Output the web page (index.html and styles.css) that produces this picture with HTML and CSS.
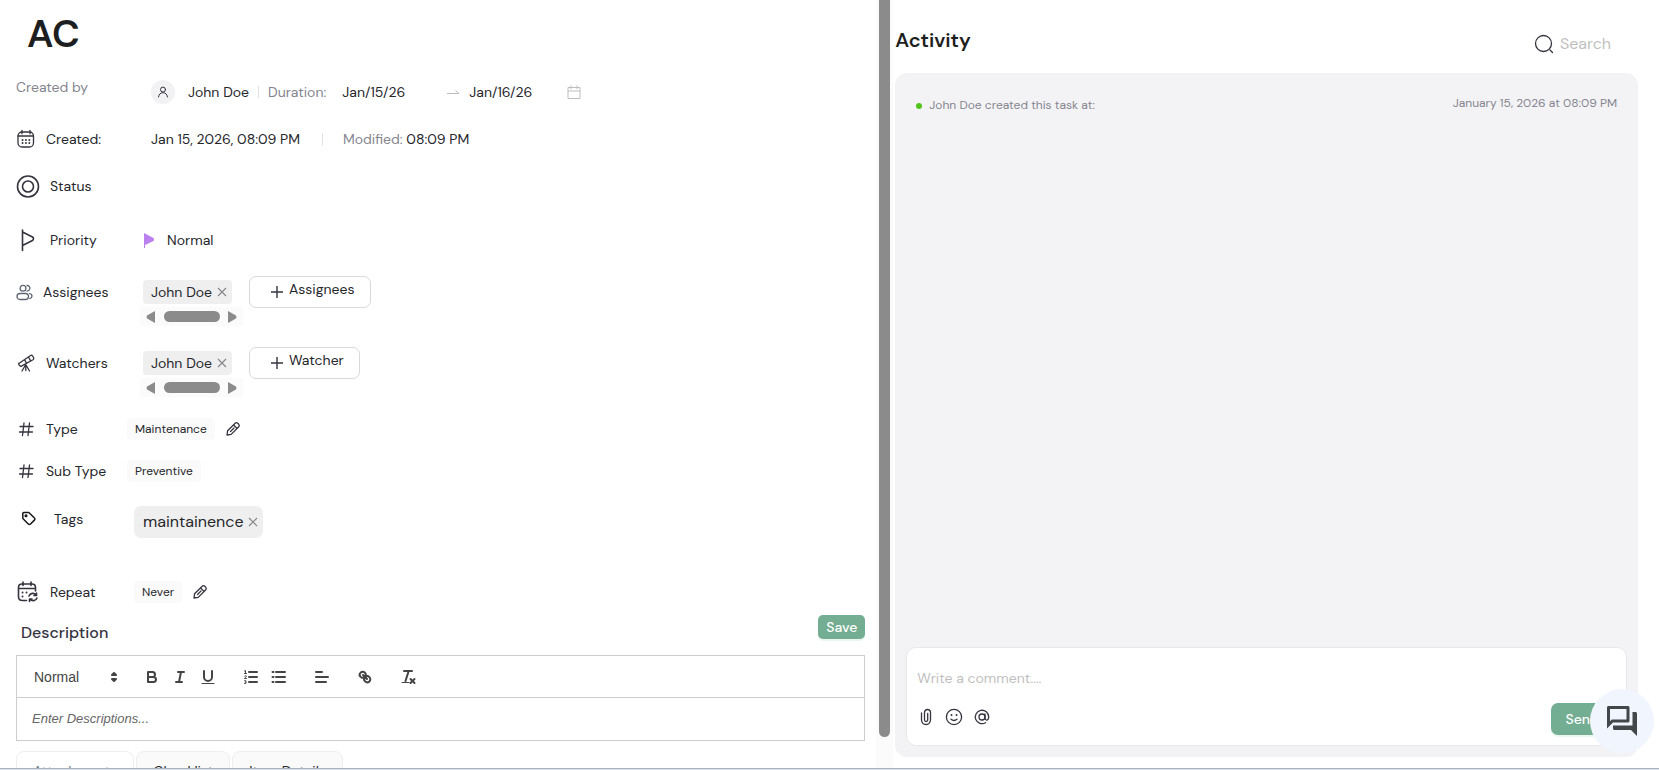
FILE: index.html
```html
<!DOCTYPE html>
<html lang="en">
<head>
<meta charset="utf-8">
<title>AC</title>
<link rel="stylesheet" href="styles.css">
</head>
<body>
<svg class="sprite" aria-hidden="true">
  <symbol id="hash" viewBox="0 0 20 20"><path d="M8 4 6.500 16.500M13.500 4 12 16.500M4 7.500h13M3.500 13h13"/></symbol>
  <symbol id="pencil" viewBox="0 0 16 16"><path d="M2 14l.6-4.200 7.600-7.600q1.300-1.100 2.600.1l.9.9q1.200 1.300.1 2.600L6.200 13.400zM8.600 4l3.400 3.400M5.500 10.500l3.500-3.500"/></symbol>
  <symbol id="cross" viewBox="0 0 10 10"><path d="M1 1l8 8M9 1 1 9"/></symbol>
  <symbol id="plus" viewBox="0 0 12 12"><path d="M6 0v12M0 6h12"/></symbol>
</svg>
<div class="app">
  <div class="panes">
    <main class="task">
      <h1 class="task-title">AC</h1>

      <div class="row row-48">
        <div class="label label-wide label-muted label-raised">Created by</div>
        <div class="value">
          <span class="avatar"><svg class="line" width="12" height="12" viewBox="0 0 12 12"><circle cx="6" cy="3.600" r="2.500"/><path d="M1.500 11c.5-2.900 2-4.300 4.500-4.300s4 1.400 4.500 4.300"/></svg></span>
          <span class="person">John Doe</span>
          <span class="divider"></span>
          <label class="muted duration" for="start">Duration:</label>
          <input class="date" id="start" value="Jan/15/26">
          <svg class="pale arrow" width="14" height="14" viewBox="0 0 14 14"><path d="M1 8.500h12L9.500 5.500"/></svg>
          <input class="date" id="end" value="Jan/16/26" aria-label="End date">
          <svg class="pale" width="14" height="14" viewBox="0 0 14 14"><path d="M1 2.500h12v11H1zM1 6h12M4 .5v3.500M10 .5v3.500"/></svg>
        </div>
      </div>

      <div class="row row-46">
        <div class="label label-wide">
          <svg class="line" width="20" height="20" viewBox="0 0 20 20"><rect x="2" y="3" width="15.500" height="15" rx="4"/><path d="M2 7H17.500M6 1.500v3.300M14 1.500v3.300"/><path class="dots" d="M6.500 11h.1M9.900 11h.1M13.300 11h.1M6.500 14h.1M9.900 14h.1M13.300 14h.1"/></svg>
          Created:
        </div>
        <div class="value">
          <span>Jan 15, 2026, 08:09 PM</span>
          <span class="divider divider-spaced"></span>
          <span class="muted">Modified:</span>&nbsp;<span>08:09 PM</span>
        </div>
      </div>

      <div class="row row-48">
        <div class="label"><svg class="line ring" width="24" height="24" viewBox="0 0 24 24"><circle cx="12" cy="12.500" r="10.500"/><circle cx="12" cy="12.500" r="5.500"/></svg>Status</div>
      </div>

      <div class="row row-60">
        <div class="label"><svg class="line flag" width="24" height="24" viewBox="0 0 24 24"><path d="M6.500 2v20.500M6.500 4l10 5q2 1.500 0 3.500l-10 5"/></svg>Priority</div>
        <div class="value priority"><svg width="10" height="15" viewBox="0 0 10 15"><path fill="#bb80f0" d="M0 0l9.500 5q1 1.500 0 3L1 12v3H0z"/></svg>Normal</div>
      </div>

      <div class="row row-people">
        <div class="label"><svg class="line people" width="17" height="17" viewBox="0 0 17 17"><circle cx="7" cy="4.300" r="2.900"/><rect x="1" y="9.500" width="11.500" height="6" rx="3"/><path d="M11 1.500q3.200.3 2.900 3-.4 2.300-2.900 2.700M13.500 9.500q2.700.8 2.500 2.800-.2 1.700-2.200 2.300"/></svg>Assignees</div>
        <div class="chips">
          <span class="chip">John Doe<button class="chip-close" aria-label="Remove John Doe"><svg width="10" height="10"><use href="#cross"/></svg></button></span>
          <div class="hscroll"><svg width="10" height="12" viewBox="0 0 10 12"><path d="M9 0v12L1 7.500Q0 6 1 4.500z"/></svg><i></i><svg width="10" height="12" viewBox="0 0 10 12"><path d="M1 0v12L9 7.500Q10 6 9 4.500z"/></svg></div>
        </div>
        <button class="add"><svg width="12" height="12"><use href="#plus"/></svg><span>Assignees</span></button>
      </div>

      <div class="row row-people">
        <div class="label"><svg class="line" width="20" height="20" viewBox="0 0 20 20"><path d="M3.200 10.200 14.600 2.500q1.300-.7 2 .5l1 1.700q.6 1.200-.6 2L5.400 13.100q-1 .5-1.500-.4l-1.200-1.300q-.4-.8.500-1.200zM8.500 6.700l2 3.400M12.500 4l2 3.600M9.500 12 6 18M10 12l3.500 6M9.800 12v5.500"/></svg>Watchers</div>
        <div class="chips">
          <span class="chip">John Doe<button class="chip-close" aria-label="Remove John Doe"><svg width="10" height="10"><use href="#cross"/></svg></button></span>
          <div class="hscroll"><svg width="10" height="12" viewBox="0 0 10 12"><path d="M9 0v12L1 7.500Q0 6 1 4.500z"/></svg><i></i><svg width="10" height="12" viewBox="0 0 10 12"><path d="M1 0v12L9 7.500Q10 6 9 4.500z"/></svg></div>
        </div>
        <button class="add"><svg width="12" height="12"><use href="#plus"/></svg><span>Watcher</span></button>
      </div>

      <div class="row row-42">
        <div class="label label-narrow"><svg class="line" width="20" height="20"><use href="#hash"/></svg>Type</div>
        <div class="value"><span class="pill">Maintenance</span><button class="edit" aria-label="Edit type"><svg class="line" width="16" height="16"><use href="#pencil"/></svg></button></div>
      </div>

      <div class="row row-42">
        <div class="label label-narrow"><svg class="line" width="20" height="20"><use href="#hash"/></svg>Sub Type</div>
        <div class="value"><span class="pill">Preventive</span></div>
      </div>

      <div class="row row-tags">
        <div class="label label-mid"><svg class="tagicon" width="28" height="16" viewBox="0 0 28 16"><path d="M6.800 2.500q0-.9 1-.9h4.700q.5 0 .9.400l5 5q1.100 1 0 2.100l-3.900 3.900q-1.100 1.100-2.200 0L7.300 8q-.5-.4-.5-1z"/><circle cx="10" cy="4.800" r=".8"/></svg>Tags</div>
        <span class="chip chip-large">maintainence<button class="chip-close" aria-label="Remove maintainence"><svg width="10" height="10"><use href="#cross"/></svg></button></span>
      </div>

      <div class="row row-repeat">
        <div class="label label-mid"><svg class="line repeat" width="24" height="24" viewBox="0 0 24 24"><path d="M10.500 20.500H6.500Q2.500 20.500 2.500 17V7.500q0-3.500 3.500-3.500h10Q19.500 4 19.500 7.500v3.500M2.500 8.500h17M7 2V5.500M15 2V5.500M13 16a4 4 0 0 1 7-1M20.500 13v2.500H18M21 18a4 4 0 0 1-7 1M13.500 21.500v-2.500H16"/><path class="dots" d="M6.500 12.500h.1M10.500 12.500h.1M6.500 16.500h.1"/></svg>Repeat</div>
        <div class="value"><span class="pill">Never</span><button class="edit" aria-label="Edit repeat"><svg class="line" width="16" height="16"><use href="#pencil"/></svg></button></div>
      </div>

      <div class="desc-head">
        <h2 class="desc-title">Description</h2>
        <button class="primary save">Save</button>
      </div>

      <div class="editor">
        <div class="toolbar">
          <span class="format">
            <select aria-label="Text style"><option>Normal</option></select>
            <svg class="format-arrows" width="18" height="18" viewBox="0 0 18 18"><path d="M7 11l2 2 2-2zM7 7l2-2 2 2z"/></svg>
          </span>
          <span class="group">
            <button aria-label="Bold"><svg viewBox="0 0 18 18"><path d="M5 4h4.500a2.500 2.500 0 0 1 0 5H5zM5 9h5.500a2.500 2.500 0 0 1 0 5H5z"/></svg></button>
            <button aria-label="Italic"><svg viewBox="0 0 18 18"><path d="M7 4h6M5 14h6M8 14l2-10"/></svg></button>
            <button aria-label="Underline"><svg viewBox="0 0 18 18"><path d="M5 3v6a4 4 0 0 0 8 0V3"/><path class="thin" d="M3 15.500h12"/></svg></button>
          </span>
          <span class="group">
            <button aria-label="Numbered list"><svg viewBox="0 0 18 18"><path d="M7 4h8M7 9h8M7 14h8"/><path class="thin" d="M2.500 5.500h2M3.500 5.500v-3l-1 .5M4.500 10.500h-2c0-1 1.900-1.200 1.900-2.200 0-.8-1.300-.8-1.700-.2M2.500 12.700c2-.8 2.500 1.300.6 1.400 2 0 1.600 2-.6 1.400"/></svg></button>
            <button aria-label="Bullet list"><svg viewBox="0 0 18 18"><path d="M6 4h9M6 9h9M6 14h9M2.500 4h1M2.500 9h1M2.500 14h1"/></svg></button>
          </span>
          <span class="group"><button aria-label="Align"><svg viewBox="0 0 18 18"><path d="M3 9h12M3 14h10M3 4h6"/></svg></button></span>
          <span class="group"><button aria-label="Link"><svg viewBox="0 0 18 18"><path d="M7 7l4 4M8.900 4.600a2.900 2.900 0 0 0-4.300 4.300C5.900 10.200 7.500 9.900 8.800 8.800 9.900 7.500 10.200 5.900 8.900 4.600zM13.400 9.100a2.900 2.900 0 0 0-4.300 4.300c1.300 1.300 3.200 1 4.300 0s1.300-3 0-4.300z"/></svg></button></span>
          <span class="group"><button aria-label="Clear formatting"><svg viewBox="0 0 18 18"><path d="M5 3h8M6.500 13 9.700 3M11.500 11l4 4M15.500 11l-4 4"/><path class="thin" d="M3 14.500h7"/></svg></button></span>
        </div>
        <textarea class="editor-body" rows="1" placeholder="Enter Descriptions..." aria-label="Description"></textarea>
      </div>

      <div class="tabs">
        <button class="tab tab-active">Attachments</button>
        <button class="tab">Checklist</button>
        <button class="tab">Item Details</button>
      </div>
    </main>

    <div class="vscroll"><i></i></div>

    <aside class="activity">
      <header class="activity-head">
        <h2 class="activity-title">Activity</h2>
        <label class="search"><svg class="line" width="20" height="20" viewBox="0 0 20 20"><circle cx="9.500" cy="9.500" r="8"/><path d="M16 16l2.500 2.500"/></svg><input placeholder="Search" aria-label="Search"></label>
      </header>
      <section class="feed">
        <div class="entry"><span class="dot"></span><span class="entry-text">John Doe created this task at:</span><time>January 15, 2026 at 08:09 PM</time></div>
        <form class="comment">
          <input class="comment-input" placeholder="Write a comment...." aria-label="Comment">
          <div class="comment-bar">
            <button type="button" aria-label="Attach file"><svg class="line" width="18" height="18" viewBox="0 0 18 18"><path d="M4.500 5v7q.4 4.500 4.500 4.500t4.500-4.500V4.500Q13.300 1.500 10.500 1.500T7.500 4.500V12q.2 1.500 1.600 1.500T10.700 12V5.500"/></svg></button>
            <button type="button" aria-label="Add emoji"><svg class="line" width="18" height="18" viewBox="0 0 18 18"><circle cx="9" cy="9" r="7.600"/><path d="M6 11.200q3 2.600 6 0"/><path class="dots" d="M6.500 7h.1M11.500 7h.1"/></svg></button>
            <button type="button" aria-label="Mention"><svg class="line" width="18" height="18" viewBox="0 0 18 18"><circle cx="9" cy="9" r="3"/><path d="M12 6v4.500q.3 1.800 2 1.600 1.600-.3 1.700-3.100A6.700 6.700 0 1 0 12.500 14.700"/></svg></button>
            <button type="button" class="primary send">Send</button>
          </div>
        </form>
      </section>
    </aside>
  </div>
  <div class="bottom-edge"></div>
</div>
<button class="chat" aria-label="Open chat"><svg width="36" height="36" viewBox="0 0 24 24"><path d="M15 4v7H5.170L4 12.170V4h11m1-2H3c-.550 0-1 .450-1 1v14l4-4h10c.550 0 1-.450 1-1V3c0-.550-.450-1-1-1zm5 4h-2v9H6v2c0 .550.450 1 1 1h11l4 4V7c0-.550-.450-1-1-1z"/></svg></button>
</body>
</html>
```
FILE: styles.css
```css
* { box-sizing: border-box; }
body {
  margin: 0;
  font: 14px/20px "DM Sans", Inter, sans-serif;
  color: #26272b;
  background: #fff;
}
button, input, select, textarea { font: inherit; color: inherit; }
button { padding: 0; border: 0; background: none; cursor: pointer; }
input { min-width: 0; padding: 0; border: 0; outline: 0; background: none; }
svg { flex: none; display: block; }
.sprite { position: absolute; width: 0; height: 0; }
.line { fill: none; stroke: #34343f; stroke-width: 1.3; stroke-linecap: round; stroke-linejoin: round; }
.dots { stroke-width: 1.8; stroke-linecap: round; }
.muted, .label-muted { color: #85858f; }

.app { height: 100vh; display: flex; flex-direction: column; overflow: hidden; }
.panes { flex: 1; min-height: 0; display: flex; }
.bottom-edge { height: 2px; background: #dce3eb; border-top: 1px solid #a3b1c1; }

/* Task details */
.task { flex: 876 0 0; min-width: 0; overflow: hidden; padding: 10px 11px 0 16px; }
.task-title { margin: 0 0 10px 11px; font-size: 38px; line-height: 48px; font-weight: 600; color: #1d1e20; }
.row { display: flex; align-items: center; }
.row-42 { min-height: 42px; }
.row-46 { min-height: 46px; }
.row-48 { min-height: 48px; }
.row-60 { min-height: 60px; }
.row-people { align-items: flex-start; margin: 6px 0 21px; }
.row-people + .row-people { margin-bottom: 11px; }
.row-people .label, .row-people .add { height: 32px; }
.row-tags { align-items: flex-start; margin: 14px 0 31px; }
.row-tags .label { height: 25px; }
.row-repeat { min-height: 46px; }
.label { display: flex; flex: none; align-items: center; gap: 10px; width: 124px; }
.label-wide { width: 135px; }
.label-narrow { width: 111px; }
.label-mid { width: 118px; }
.label-raised { padding-bottom: 10px; }
.ring, .repeat { stroke-width: 1.6; }
.flag { stroke-width: 1.6; }
.people { stroke: #5f6673; }
.tagicon { fill: none; stroke: #17181a; stroke-width: 1.5; stroke-linejoin: round; }
.value { display: flex; align-items: center; }
.priority { gap: 13px; padding-left: 4px; }
.avatar { display: grid; place-items: center; width: 24px; height: 24px; border-radius: 50%; background: #f2f2f4; }
.avatar .line { stroke-width: 1; }
.person { margin-left: 13px; }
.divider { width: 1px; height: 12px; margin: 0 9px; background: #dfdfe6; }
.divider-spaced { margin: 0 20px 0 22px; }
.duration { margin-right: 16px; }
.date { width: 99px; }
.arrow { margin: 0 9px 0 5px; }
.pale { fill: none; stroke: #bdbdbd; stroke-width: 1; }
.arrow + .date { width: 98px; }

.chips { width: 103px; margin-right: 6px; padding-top: 4px; }
.chip { display: inline-flex; align-items: center; gap: 5px; height: 24px; padding: 0 5px 0 8px; margin-left: 3px; border-radius: 4px; background: #efefef; white-space: nowrap; }
.chip-large { height: 32px; margin-left: 0; padding: 0 5px 0 9px; gap: 4px; border-radius: 7px; font-size: 16px; }
.chip-close svg { stroke: #85858a; stroke-width: 1.1; }
.hscroll { display: flex; align-items: center; justify-content: space-between; height: 19px; padding: 0 6px; background: #fbfbfb; fill: #8b8b8b; }
.chips .chip { display: flex; width: 89px; margin-bottom: 3px; }
.hscroll i { width: 56px; height: 11px; border-radius: 6px; background: #8b8b8b; }
.add { display: flex; align-items: center; gap: 6px; padding: 0 15px 0 21px; border: 1px solid #d9d9d9; border-radius: 7px; background: #fff; }
.add svg { stroke: #34343f; stroke-width: 1.4; }
.add span { padding-bottom: 6px; }
.pill { padding: 1px 8px; border-radius: 4px; background: #fafafa; font-size: 12px; }
.edit { margin-left: 10px; }

.desc-head { display: flex; align-items: flex-start; justify-content: space-between; }
.desc-title { margin: 6px 0 10px 5px; font-size: 16px; line-height: 24px; font-weight: 500; color: #34343f; }
.primary { border-radius: 5px; background: #73ae92; color: #fff; font-weight: 500; box-shadow: 0 2px 0 #eaf6ef; }
.save { height: 24px; padding: 0 8px; }

.editor { border: 1px solid #ccc; font-family: "Liberation Sans", Arial, sans-serif; }
.toolbar { display: flex; align-items: center; gap: 15px; padding: 9px 8px 8px 9px; border-bottom: 1px solid #ccc; color: #444; }
.format { position: relative; width: 97px; }
.format select { appearance: none; width: 100%; height: 24px; padding: 0 8px; border: 0; background: none; font-weight: 500; }
.format-arrows { position: absolute; top: 3px; right: 0; fill: #444; stroke: #444; stroke-width: 2; stroke-linejoin: round; pointer-events: none; }
.group { display: flex; }
.group button { width: 28px; height: 24px; padding: 3px 5px; }
.group svg { width: 18px; height: 18px; fill: none; stroke: #444; stroke-width: 2; stroke-linecap: round; stroke-linejoin: round; }
.group .thin { stroke-width: 1; }
.editor-body { display: block; width: 100%; height: 42px; padding: 12px 15px; border: 0; outline: 0; resize: none; overflow: hidden; font-size: 13px; line-height: 18px; background: none; }
.editor-body::placeholder { color: #666; font-style: italic; opacity: 1; }

.tabs { display: flex; gap: 2px; margin-top: 10px; }
.tab { height: 40px; padding: 0 16px; border: 1px solid #eee; border-radius: 8px 8px 0 0; background: #fafafa; }
.tab-active { background: #fff; color: #73808c; }

.vscroll { display: flex; justify-content: center; flex: none; width: 17px; background: #fbfbfb; }
.vscroll i { width: 11px; height: 96%; border-radius: 0 0 6px 6px; background: #8b8b8b; }

/* Activity */
.activity { flex: 766 0 0; min-width: 0; display: flex; flex-direction: column; padding: 0 21px 11px 2px; }
.activity-head { display: flex; align-items: center; justify-content: space-between; height: 73px; padding-top: 6px; }
.activity-title { margin: 0; font-size: 20px; line-height: 28px; font-weight: 600; color: #1d1e20; }
.search { display: flex; align-items: center; gap: 6px; padding-top: 8px; }
.search input { width: 78px; font-size: 16px; }
.search input::placeholder, .comment-input::placeholder { color: #bfbfbf; opacity: 1; }
.feed { flex: 1; display: flex; flex-direction: column; justify-content: space-between; padding: 20px 11px 11px; border-radius: 12px; background: #f3f3f5; }
.entry { display: flex; align-items: flex-start; padding: 0 10px; font-size: 12px; color: #85858f; }
.entry-text { flex: 1; padding-top: 2px; }
.dot { width: 6px; height: 6px; margin: 10px 7px 0 0; border-radius: 50%; background: #52c41a; }
.comment { padding: 19px 12px 10px 10px; border: 1px solid #e8e8eb; border-radius: 10px; background: #fff; }
.comment-input { display: block; width: 100%; font-size: 14px; line-height: 22px; }
.comment-bar { display: flex; align-items: center; gap: 10px; margin-top: 14px; }
.comment-bar svg { margin-bottom: 4px; }
.send { height: 32px; margin-left: auto; padding: 0 15px; border-radius: 7px; }
.chat { position: fixed; right: 5px; bottom: 17px; display: grid; place-items: center; width: 64px; height: 64px; border-radius: 50%; background: #f1f5fe; fill: #444749; }
```
